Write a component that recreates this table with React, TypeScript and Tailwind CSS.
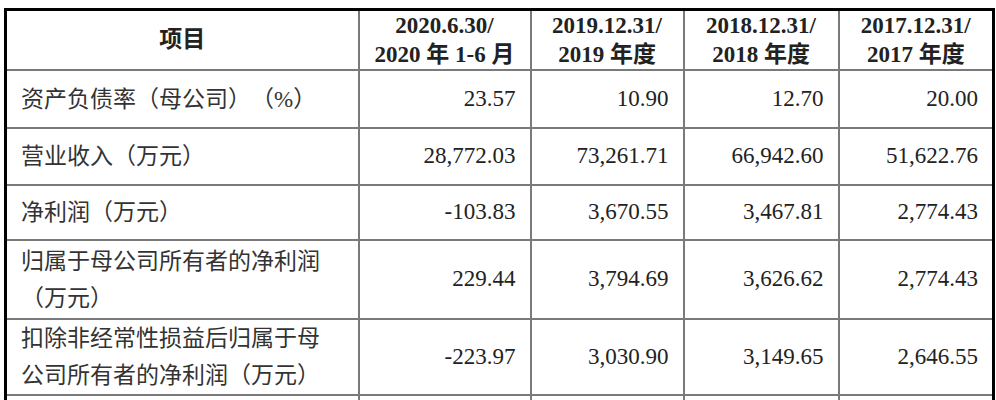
import React from 'react'

interface Row {
	label: string[]
	values: string[]
	height: string
}

const rows: Row[] = [
	{ label: ['资产负债率（母公司）（%）'], values: ['23.57', '10.90', '12.70', '20.00'], height: 'h-[58px]' },
	{ label: ['营业收入（万元）'], values: ['28,772.03', '73,261.71', '66,942.60', '51,622.76'], height: 'h-[57px]' },
	{ label: ['净利润（万元）'], values: ['-103.83', '3,670.55', '3,467.81', '2,774.43'], height: 'h-[55px]' },
	{ label: ['归属于母公司所有者的净利润', '（万元）'], values: ['229.44', '3,794.69', '3,626.62', '2,774.43'], height: 'h-[79px]' },
	{ label: ['扣除非经常性损益后归属于母', '公司所有者的净利润（万元）'], values: ['-223.97', '3,030.90', '3,149.65', '2,646.55'], height: 'h-[76px]' },
]

const headers = [
	['2020.6.30/', '2020 年 1-6 月'],
	['2019.12.31/', '2019 年度'],
	['2018.12.31/', '2018 年度'],
	['2017.12.31/', '2017 年度'],
]

const font = "font-['Liberation_Serif','Noto_Sans_CJK_SC',serif]"

export default function App() {
	return (
		<div className={`h-[400px] w-[996px] overflow-hidden bg-white [text-spacing-trim:space-all] ${font}`}>
			<div className="pl-[4px] pt-[8px]">
				<table className="w-[988px] table-fixed border-collapse border-[3px] border-black text-[#222]">
					<colgroup>
						<col className="w-[353px]" />
						<col className="w-[172px]" />
						<col className="w-[153px]" />
						<col className="w-[155px]" />
						<col className="w-[155px]" />
					</colgroup>
					<thead>
						<tr className="h-[58px]">
							<th className="border-2 border-[#7a7a7a] text-center text-[23px] font-bold">项目</th>
							{headers.map((h) => (
								<th key={h[0]} className="border-2 border-[#7a7a7a] text-center text-[23px] font-bold leading-[29px]">
									<div>{h[0]}</div>
									<div>{h[1]}</div>
								</th>
							))}
						</tr>
					</thead>
					<tbody>
						{rows.map((r) => (
							<tr key={r.label[0]} className={r.height}>
								<td className="border-2 border-[#7a7a7a] pl-[14px] text-left text-[23px] leading-[37px] text-[#333]">
									{r.label.map((l) => (
										<div key={l}>{l}</div>
									))}
								</td>
								{r.values.map((v, i) => (
									<td key={i} className="border-2 border-[#7a7a7a] pr-[14px] text-right text-[23px]">
										{v}
									</td>
								))}
							</tr>
						))}
						<tr className="h-[56px]">
							<td className="border-2 border-[#7a7a7a]"></td>
							<td className="border-2 border-[#7a7a7a]"></td>
							<td className="border-2 border-[#7a7a7a]"></td>
							<td className="border-2 border-[#7a7a7a]"></td>
							<td className="border-2 border-[#7a7a7a]"></td>
						</tr>
					</tbody>
				</table>
			</div>
		</div>
	)
}
